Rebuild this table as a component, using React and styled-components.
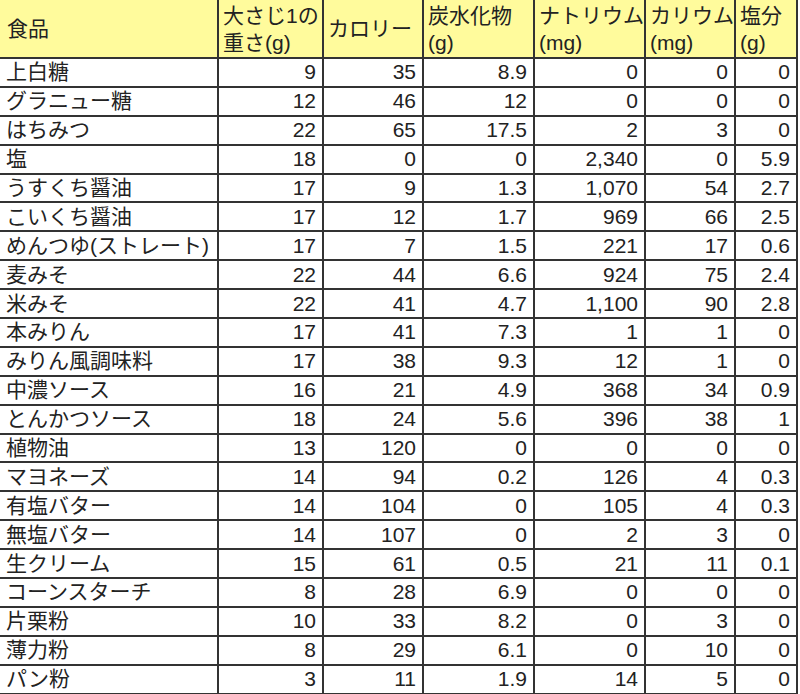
import React from "react";
import styled, { createGlobalStyle } from "styled-components";

const GlobalStyle = createGlobalStyle`
  html, body {
    margin: 0;
    padding: 0;
    background: #ffffff;
  }
`;

const columns = [218, 105, 100, 111, 111, 90, 62];

const headers = [
  ["食品"],
  ["大さじ1の", "重さ(g)"],
  ["カロリー"],
  ["炭水化物", "(g)"],
  ["ナトリウム", "(mg)"],
  ["カリウム", "(mg)"],
  ["塩分", "(g)"],
];

const foods = [
  ["上白糖", "9", "35", "8.9", "0", "0", "0"],
  ["グラニュー糖", "12", "46", "12", "0", "0", "0"],
  ["はちみつ", "22", "65", "17.5", "2", "3", "0"],
  ["塩", "18", "0", "0", "2,340", "0", "5.9"],
  ["うすくち醤油", "17", "9", "1.3", "1,070", "54", "2.7"],
  ["こいくち醤油", "17", "12", "1.7", "969", "66", "2.5"],
  ["めんつゆ(ストレート)", "17", "7", "1.5", "221", "17", "0.6"],
  ["麦みそ", "22", "44", "6.6", "924", "75", "2.4"],
  ["米みそ", "22", "41", "4.7", "1,100", "90", "2.8"],
  ["本みりん", "17", "41", "7.3", "1", "1", "0"],
  ["みりん風調味料", "17", "38", "9.3", "12", "1", "0"],
  ["中濃ソース", "16", "21", "4.9", "368", "34", "0.9"],
  ["とんかつソース", "18", "24", "5.6", "396", "38", "1"],
  ["植物油", "13", "120", "0", "0", "0", "0"],
  ["マヨネーズ", "14", "94", "0.2", "126", "4", "0.3"],
  ["有塩バター", "14", "104", "0", "105", "4", "0.3"],
  ["無塩バター", "14", "107", "0", "2", "3", "0"],
  ["生クリーム", "15", "61", "0.5", "21", "11", "0.1"],
  ["コーンスターチ", "8", "28", "6.9", "0", "0", "0"],
  ["片栗粉", "10", "33", "8.2", "0", "3", "0"],
  ["薄力粉", "8", "29", "6.1", "0", "10", "0"],
  ["パン粉", "3", "11", "1.9", "14", "5", "0"],
];

const Sheet = styled.table`
  width: 797px;
  table-layout: fixed;
  border-collapse: collapse;
  font-family: "Liberation Sans", "Noto Sans CJK JP", sans-serif;
  font-size: 21px;
  color: #222;
  background: #fff;
`;

const HeadRow = styled.tr`
  height: 58px;
  background: #fffb9c;
`;

const BodyRow = styled.tr`
  height: 28.9px;
`;

const HeadCell = styled.th`
  font-weight: 400;
  text-align: left;
  vertical-align: middle;
  line-height: 27px;
  padding: 0 0 0 ${(p) => (p.$first ? 7 : 4)}px;
  border-left: ${(p) => (p.$first ? "none" : "2px solid #333")};
  border-right: 2px solid #333;
  border-bottom: 2px solid #333;
  white-space: nowrap;
  overflow: hidden;
`;

const HeadLine = styled.div``;

const NameCell = styled.td`
  padding: 0 0 0 6px;
  text-align: left;
  line-height: 26px;
  border-bottom: 2px solid #333;
  border-right: 2px solid #333;
  white-space: nowrap;
  overflow: hidden;
`;

const NumCell = styled.td`
  padding: 0 6px 0 0;
  text-align: right;
  line-height: 26px;
  border: 2px solid #333;
  border-top: none;
  white-space: nowrap;
`;

export default function App() {
  return (
    <>
      <GlobalStyle />
      <Sheet>
        <colgroup>
          {columns.map((w, i) => (
            <col key={i} style={{ width: w }} />
          ))}
        </colgroup>
        <thead>
          <HeadRow>
            {headers.map((lines, i) => (
              <HeadCell key={i} $first={i === 0}>
                {lines.map((line) => (
                  <HeadLine key={line}>{line}</HeadLine>
                ))}
              </HeadCell>
            ))}
          </HeadRow>
        </thead>
        <tbody>
          {foods.map(([name, ...values]) => (
            <BodyRow key={name}>
              <NameCell>{name}</NameCell>
              {values.map((v, i) => (
                <NumCell key={i}>{v}</NumCell>
              ))}
            </BodyRow>
          ))}
        </tbody>
      </Sheet>
    </>
  );
}
